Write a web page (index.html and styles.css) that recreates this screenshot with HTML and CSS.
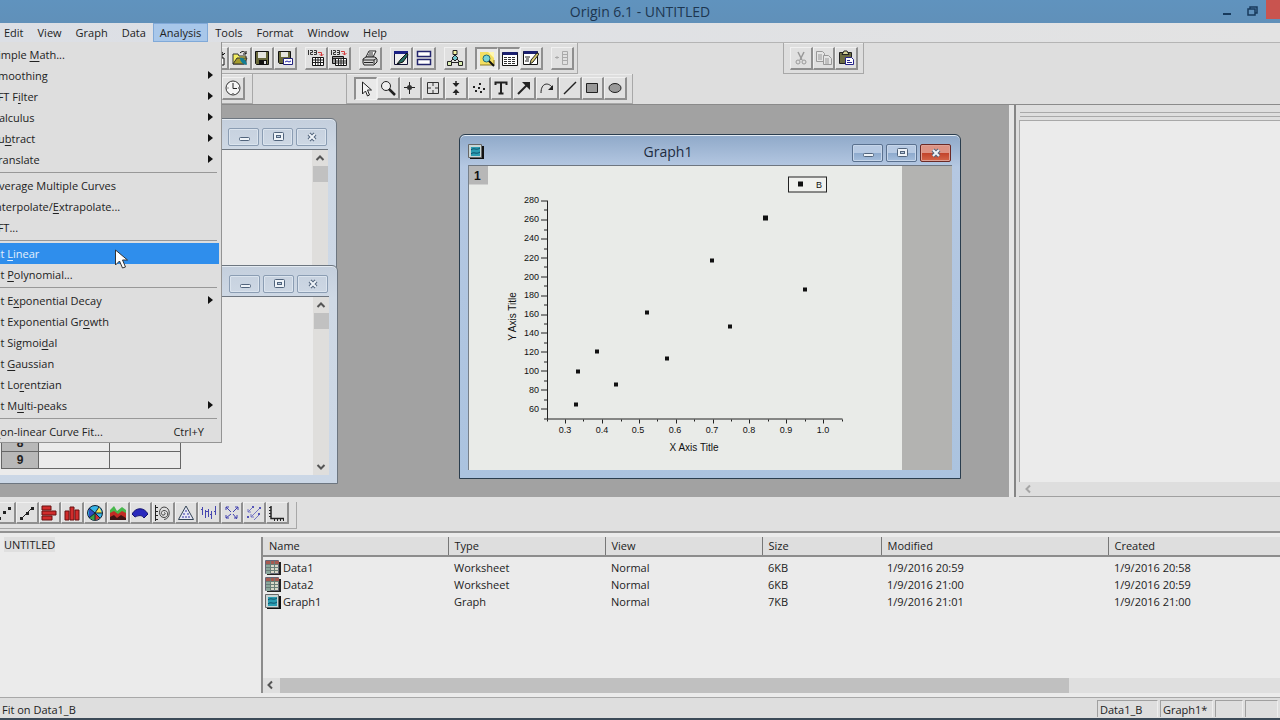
FILE: index.html
```
<!DOCTYPE html>
<html lang="en">
<head>
<meta charset="utf-8">
<title>Origin 6.1 - UNTITLED</title>
<link rel="stylesheet" href="styles.css">
</head>
<body>
<svg class="defs" aria-hidden="true">
  <symbol id="w-min" viewBox="0 0 16 12"><rect x="3.5" y="6.500" width="10" height="3" rx="1" fill="#eef3f8" stroke="#51647c"/></symbol>
  <symbol id="w-max" viewBox="0 0 16 12"><rect x="3.500" y="1.500" width="10" height="8" rx="1" fill="#eef3f8" stroke="#51647c"/><rect x="6.500" y="4.500" width="4" height="2" fill="#b9cbe0" stroke="#51647c"/></symbol>
  <symbol id="w-close" viewBox="0 0 16 12"><path d="M5 3l6 6M11 3l-6 6" stroke="#51647c" stroke-width="4"/><path d="M5 3l6 6M11 3l-6 6" stroke="#eef3f8" stroke-width="2"/></symbol>
  <symbol id="sheet" viewBox="0 0 16 16"><path d="M2 2h14v13H2z" fill="#222"/><path d="M.5.5h13v13H.5z" fill="#d8d8c8" stroke="#667"/><path d="M1 1h13v3H1z" fill="#a65a50"/><path d="M1 4h4v10H1z" fill="#8aa79c"/><path d="M1 4.500h13M1 7.500h13M1 10.500h13M5.500 1v13M9.500 1v13" stroke="#6a7e78"/></symbol>
  <symbol id="graphico" viewBox="0 0 16 16"><path d="M2 2h14v13H2z" fill="#111"/><path d="M.5.5h13v13H.5z" fill="#c9d6d6" stroke="#666"/><path d="M3 3h9v9H3z" fill="#2b9db2"/><path d="M3 6c3-3 5 1 9-2M3 10c3-3 5 1 9-2" stroke="#0b4c66" fill="none"/></symbol>
  <symbol id="up" viewBox="0 0 10 8"><path d="M1.500 6L5 2.500 8.500 6" fill="none" stroke="#555" stroke-width="2"/></symbol>
</svg>

<div class="app">
  <header class="titlebar">
    <h1>Origin 6.1 - UNTITLED</h1>
    <div class="sys">
      <button aria-label="Minimize"><svg width="12" height="12"><path d="M1 9h8" stroke="#173a5c" stroke-width="2"/></svg></button>
      <button aria-label="Restore"><svg width="12" height="12"><path d="M1 4h7v6H1zM3 4V2h7v6H8" fill="none" stroke="#173a5c" stroke-width="1.500"/></svg></button>
      <button class="quit" aria-label="Close"></button>
    </div>
  </header>

  <nav class="menubar">
    <button>Edit</button><button>View</button><button>Graph</button><button>Data</button><button class="open">Analysis</button><button>Tools</button><button>Format</button><button>Window</button><button>Help</button>
  </nav>

  <div class="toolbars">
    <div class="bar standard">
      <div class="set four">
        <button aria-label="New"><svg viewBox="0 0 16 16"><path d="M3 5h10v10H3z" fill="#fff" stroke="#111"/><path d="M8 8h7v7H8z" fill="#fff" stroke="#111"/><path d="M10 2c3-2 4 1 4 3l-2-2m2 2l2-2" stroke="#111" fill="none"/></svg></button>
        <button aria-label="Open"><svg viewBox="0 0 16 16"><path d="M1 14V4h5l1 2h7v8z" fill="#f3ee62" stroke="#333"/><path d="M1 14l4-6h10l-3 6z" fill="#a59c2d" stroke="#333"/><path d="M8 3c3-3 5-1 6 1m0 0V1m0 3h-3" stroke="#111" fill="none"/><path d="M8 8c3-1 6 2 7 7-4-1-7-3-7-7z" fill="#127e96"/></svg></button>
        <button aria-label="Save"><svg viewBox="0 0 16 16"><path d="M1.500 1.500h13v13h-12l-1-1z" fill="#68683a" stroke="#111"/><path d="M4 2h8v6H4z" fill="#e4e4de"/><path d="M5 10h8v5H5z" fill="#111"/><path d="M10 11h2v3h-2z" fill="#ddd"/></svg></button>
        <button aria-label="Save template"><svg viewBox="0 0 16 16"><path d="M1.500 1.500h12v12h-11l-1-1z" fill="#68683a" stroke="#111"/><path d="M4 2h7v5H4z" fill="#e4e4de"/><path d="M6.500 8.500h9v6h-9z" fill="#fff" stroke="#22227c"/><path d="M8 12l2-1 2 1 2-1" stroke="#22a" fill="none"/></svg></button>
      </div>
      <div class="set two">
        <button aria-label="Import ASCII"><svg viewBox="0 0 16 16"><path d="M.5 0v5M2 .5h2.500v2H2.500v2H5M6 .5h2.500v4H6m0-2h2" stroke="#333" fill="none"/><path d="M10 2.500h3.500V6M11.500 4l2 2 2-2" stroke="#d33b3b" fill="none"/><path d="M4.500 7.500h11v8h-11z" fill="#fff" stroke="#111"/><path d="M5 10h10M5 12.500h10M7.500 8v7M10 8v7M12.500 8v7" stroke="#222"/></svg></button>
        <button aria-label="Import multiple ASCII"><svg viewBox="0 0 16 16"><path d="M.5 0v5M2 .5h2.500v2H2.500v2H5M6 .5h2.500v4H6m0-2h2" stroke="#333" fill="none"/><path d="M10 1.500h3.500V5M11.500 3l2 2 2-2" stroke="#d33b3b" fill="none"/><path d="M1.500 6.500h11v7h-11z" fill="#999" stroke="#111"/><path d="M4.500 8.500h11v7h-11z" fill="#fff" stroke="#111"/><path d="M2 8.500h10M5 11h10M5 13h10M7.500 9v6M10 9v6M12.500 9v6" stroke="#222"/></svg></button>
      </div>
      <div class="set one"><button aria-label="Print"><svg viewBox="0 0 16 16"><path d="M4 7l3-6h7l-3 6z" fill="#fff" stroke="#222"/><path d="M7 3h4M6 5h5" stroke="#222"/><path d="M1 9l3-2h9l2 2v3l-3 3H2l-1-2z" fill="#d6d6d6" stroke="#222"/><path d="M1 10h11l3-2M2 12.500h9M12 10v4" stroke="#222" fill="none"/></svg></button></div>
      <div class="set two">
        <button aria-label="Custom routine"><svg viewBox="0 0 16 16"><path d="M1.500 1.500h13v13h-13z" fill="#eee" stroke="#113"/><path d="M1 1h14v3H1z" fill="#1c2184"/><path d="M14 3L8 9l-4 5 6-2 5-7z" fill="#276b62" stroke="#111"/></svg></button>
        <button aria-label="Refresh"><svg viewBox="0 0 16 16"><path d="M1.500 1.500h13v5h-13zM1.500 9.500h13v5h-13z" fill="#fff" stroke="#22246c" stroke-width="1.500"/></svg></button>
      </div>
      <div class="set one"><button aria-label="Duplicate"><svg viewBox="0 0 16 16"><path d="M8 4v3M8 7L3 12M8 7l5 5M3 12.500h10" stroke="#222" fill="none"/><path d="M6 .5h4v4H6z" fill="#f2f1a0" stroke="#222"/><path d="M8 5l3 3-3 3-3-3z" fill="#6cc3cc" stroke="#222"/><path d="M.5 11.500h4v4h-4zM11.500 11.500h4v4h-4z" fill="#d9ecb0" stroke="#222"/></svg></button></div>
      <div class="set three">
        <button class="down" aria-label="Project explorer"><svg viewBox="0 0 16 16"><path d="M1 1h14v13H1z" fill="#f4df62"/><path d="M9 1h6v6z" fill="#fff7b0"/><path d="M1 14h14V9" stroke="#8c7b24" fill="none"/><circle cx="7.500" cy="7.500" r="3.500" fill="#79d4d8" stroke="#226b74"/><path d="M10 10l5 5" stroke="#111" stroke-width="2"/></svg></button>
        <button class="down" aria-label="Results log"><svg viewBox="0 0 16 16"><path d="M.5 1.500h15v13H.5z" fill="#fff" stroke="#111"/><path d="M.5 1h15v3H.5z" fill="#1b2070"/><path d="M2 6.500h12M2 8.500h12M2 10.500h12M2 12.500h12" stroke="#333" stroke-dasharray="3 1"/></svg></button>
        <button aria-label="Script window"><svg viewBox="0 0 16 16"><path d="M.5 1.500h14v13H.5z" fill="#fff" stroke="#111"/><path d="M.5 1h14v3H.5z" fill="#1b2070"/><path d="M2 7h5M3 9h3M2 11h4" stroke="#222"/><path d="M14 3l2 1-6 8-3 2 1-4z" fill="#dccd72" stroke="#222"/></svg></button>
      </div>
      <div class="set one"><button disabled aria-label="Add column"><svg viewBox="0 0 16 16"><path d="M1 7.500h4M3 6v3" stroke="#aaa"/><path d="M8.500 1.500h5v13h-5zM8 4.500h5M8 7.500h5M8 10.500h5" fill="none" stroke="#aaa"/></svg></button></div>
    </div>
    <div class="bar clip">
      <div class="set three">
        <button disabled aria-label="Cut"><svg viewBox="0 0 16 16"><path d="M5 2l4 8M11 2L7 10" stroke="#999" stroke-width="1.500"/><circle cx="5" cy="12" r="2" fill="none" stroke="#999"/><circle cx="11" cy="12" r="2" fill="none" stroke="#999"/></svg></button>
        <button disabled aria-label="Copy"><svg viewBox="0 0 16 16"><path d="M.5 1.500h6l2 2v8h-8zM2 5h4M2 7h4M2 9h4" fill="#e5e5e5" stroke="#999"/><path d="M7.500 5.500h5l3 3v6h-8zM9 9h4M9 11h4M9 13h4" fill="#e5e5e5" stroke="#999"/></svg></button>
        <button aria-label="Paste"><svg viewBox="0 0 16 16"><path d="M1.500 2.500h12v11h-12z" fill="#6b6b42" stroke="#222"/><path d="M4 4.500L6 1h3l2 3.500z" fill="#d6d399" stroke="#222"/><path d="M7.500 7.500h6l2 2v5h-8z" fill="#fff" stroke="#26248a"/><path d="M9 10.500h3M9 12.500h5" stroke="#26248a"/></svg></button>
      </div>
    </div>
    <div class="bar tools-a"><div class="set one"><button aria-label="Clock"><svg viewBox="0 0 16 16"><circle cx="8" cy="8" r="7" fill="#f5f5f5" stroke="#333"/><path d="M8 3v5.500h4" stroke="#222" fill="none"/><path d="M8 13v1M2.500 8h1M13 8h1" stroke="#222"/></svg></button></div></div>
    <div class="bar tools-b">
      <div class="set twelve">
        <button class="down" aria-label="Pointer"><svg viewBox="0 0 16 16"><path d="M4.500 1v12l3-3 2 5 2-1-2-5h4z" fill="#f4f4f4" stroke="#222"/></svg></button>
        <button aria-label="Zoom"><svg viewBox="0 0 16 16"><circle cx="6" cy="6" r="4.500" fill="#eee" stroke="#222"/><path d="M9 9l6 6" stroke="#222" stroke-width="2.500"/></svg></button>
        <button aria-label="Screen reader"><svg viewBox="0 0 16 16"><path d="M7.500 2v12M2 7.500h11" stroke="#222"/><circle cx="7.500" cy="7.500" r="2.500" fill="#333"/></svg></button>
        <button aria-label="Data reader"><svg viewBox="0 0 16 16"><path d="M2.500 2.500h11v11h-11z" fill="none" stroke="#333"/><path d="M8 3v3M8 10v3M3 8h3M10 8h3" stroke="#333"/></svg></button>
        <button aria-label="Data selector"><svg viewBox="0 0 16 16"><path d="M8 1v3M8 12v3" stroke="#222" stroke-width="1.500"/><path d="M4.500 3h7L8 7zM4.500 13h7L8 9z" fill="#222"/></svg></button>
        <button aria-label="Draw data"><svg viewBox="0 0 16 16"><path d="M2 6h2v2H2zM4 10h2v2H4zM7 7h2v2H7zM8 3h2v2H8zM12 8h2v2h-2zM9 11h2v2H9z" fill="#222"/></svg></button>
        <button aria-label="Text"><svg viewBox="0 0 16 16"><path d="M2.500 5V2.500h11V5M8 3v11M5.500 13.500h5" fill="none" stroke="#222" stroke-width="2"/></svg></button>
        <button aria-label="Arrow"><svg viewBox="0 0 16 16"><path d="M2 14L11 5" stroke="#222" stroke-width="2"/><path d="M14 2v8L6 2z" fill="#222"/></svg></button>
        <button aria-label="Curved arrow"><svg viewBox="0 0 16 16"><path d="M2 13C2 3 9 2 13 7" stroke="#222" fill="none"/><path d="M14 5v5H9z" fill="#222"/></svg></button>
        <button aria-label="Line"><svg viewBox="0 0 16 16"><path d="M2 14L14 2" stroke="#222" stroke-width="1.500"/></svg></button>
        <button aria-label="Rectangle"><svg viewBox="0 0 16 16"><path d="M2.500 3.500h11v9h-11z" fill="#999" stroke="#222"/></svg></button>
        <button aria-label="Ellipse"><svg viewBox="0 0 16 16"><ellipse cx="8" cy="8" rx="6" ry="4.500" fill="#999" stroke="#222"/></svg></button>
      </div>
    </div>
  </div>

  <main class="workspace">
    <section class="mdi">
      <article class="win data1">
        <div class="wtitle"><div class="wbtns"><button aria-label="Minimize"><svg><use href="#w-min"/></svg></button><button aria-label="Maximize"><svg><use href="#w-max"/></svg></button><button aria-label="Close"><svg><use href="#w-close"/></svg></button></div></div>
        <div class="wbody"><div class="cells"></div><div class="vscroll"><svg><use href="#up"/></svg><i></i></div></div>
      </article>
      <article class="win data2">
        <div class="wtitle"><div class="wbtns"><button aria-label="Minimize"><svg><use href="#w-min"/></svg></button><button aria-label="Maximize"><svg><use href="#w-max"/></svg></button><button aria-label="Close"><svg><use href="#w-close"/></svg></button></div></div>
        <div class="wbody">
          <div class="cells"><table class="sheet"><tr><th scope="row">8</th><td></td><td></td></tr><tr><th scope="row">9</th><td></td><td></td></tr></table></div>
          <div class="vscroll"><svg><use href="#up"/></svg><i></i><svg class="dn"><use href="#up"/></svg></div>
        </div>
      </article>
      <article class="win graph">
        <div class="wtitle"><svg class="ico"><use href="#graphico"/></svg><h2>Graph1</h2><div class="wbtns"><button aria-label="Minimize"><svg><use href="#w-min"/></svg></button><button aria-label="Maximize"><svg><use href="#w-max"/></svg></button><button class="red" aria-label="Close"><svg><use href="#w-close"/></svg></button></div></div>
        <div class="wbody">
          <svg class="plot" viewBox="469 167 433 303" role="img" aria-label="Scatter plot of B">
            <rect x="468" y="166" width="20" height="19" fill="#b7b7b7"/>
            <text class="layer" x="474" y="180">1</text>
            <path class="ax" d="M547.500 201v219M547 419.500h295.500M541 201.500h6M541 220.500h6M541 239.500h6M541 258.500h6M541 277.500h6M541 296.500h6M541 315.500h6M541 333.500h6M541 352.500h6M541 371.500h6M541 390.500h6M541 409.500h6M544 210.500h3M544 230.500h3M544 249.500h3M544 267.500h3M544 286.500h3M544 305.500h3M544 324.500h3M544 343.500h3M544 362.500h3M544 381.500h3M544 400.500h3M544 419.500h3M565.500 420v4M602.500 420v4M639.500 420v4M676.500 420v4M713.500 420v4M749.500 420v4M786.500 420v4M823.500 420v4M547.500 420v2M583.500 420v2M621.500 420v2M657.500 420v2M694.500 420v2M731.500 420v2M768.500 420v2M805.500 420v2M842.500 420v2"/>
            <g class="tick end"><text x="539" y="203">280</text><text x="539" y="222">260</text><text x="539" y="241">240</text><text x="539" y="261">220</text><text x="539" y="280">200</text><text x="539" y="298">180</text><text x="539" y="317">160</text><text x="539" y="336">140</text><text x="539" y="355">120</text><text x="539" y="374">100</text><text x="539" y="393">80</text><text x="539" y="412">60</text></g>
            <g class="tick mid"><text x="565" y="433">0.3</text><text x="602" y="433">0.4</text><text x="638" y="433">0.5</text><text x="675" y="433">0.6</text><text x="712" y="433">0.7</text><text x="749" y="433">0.8</text><text x="786" y="433">0.9</text><text x="823" y="433">1.0</text></g>
            <text class="name" x="694" y="451">X Axis Title</text>
            <text class="name" transform="translate(516 317) rotate(-90)">Y Axis Title</text>
            <rect x="788.500" y="177.500" width="38" height="15" fill="#f0f1ee" stroke="#222"/>
            <path d="M798 182h5v5h-5z"/><text class="tick" x="816" y="188">B</text>
            <path d="M763 216h5v5h-5zM710 259h4v4h-4zM803 288h4v4h-4zM645 311h4v4h-4zM728 325h4v4h-4zM595 350h4v4h-4zM665 357h4v4h-4zM576 370h4v4h-4zM614 383h4v4h-4zM574 403h4v4h-4z"/>
          </svg>
          <div class="outside"></div>
        </div>
      </article>
    </section>
    <aside class="dock">
      <div class="grip"></div>
      <div class="log"></div>
      <div class="logscroll"><svg class="left faint"><use href="#up"/></svg></div>
    </aside>
  </main>

  <div class="plotbar">
    <div class="set thirteen">
      <button aria-label="Scatter"><svg viewBox="0 0 16 16"><path d="M2 12h3v3H2zM7 6h3v3H7zM12 2h3v3h-3z" fill="#222"/></svg></button>
      <button aria-label="Line and symbol"><svg viewBox="0 0 16 16"><path d="M3 13L13 3" stroke="#222"/><path d="M1 12h3v3H1zM7 7h3v3H7zM12 2h3v3h-3z" fill="#222"/></svg></button>
      <button aria-label="Bar"><svg viewBox="0 0 16 16"><path d="M1 1h9v4H1zM1 6h14v4H1zM1 11h10v4H1z" fill="#d12c2c" stroke="#611"/></svg></button>
      <button aria-label="Column"><svg viewBox="0 0 16 16"><path d="M1 6h4v9H1zM6 2h4v13H6zM11 5h4v10h-4z" fill="#d12c2c" stroke="#611"/></svg></button>
      <button aria-label="Pie"><svg viewBox="0 0 16 16"><circle cx="8" cy="8" r="7.500" fill="#38b5e8" stroke="#123"/><path d="M8 8L2 3v10z" fill="#2d4dc4"/><path d="M8 8l4-6 3 6z" fill="#eee85b"/><path d="M8 8l5 5-5 2.500z" fill="#cf3131"/><path d="M8 8v7.500L2 13z" fill="#3aa145"/><path d="M8 8L2 3M8 8l4-6M8 8h7M8 8v7M8 8l-6 5M8 8l5 5" stroke="#123"/></svg></button>
      <button aria-label="Area"><svg viewBox="0 0 16 16"><path d="M0 15V5l4-4 3 5 5-4 4 3v10z" fill="#47b84b"/><path d="M0 15V8l4-2 4 3 4-3 4 2v7z" fill="#c22b24"/><path d="M0 15v-3l4-2 3 3 4-3 5 3v2z" fill="#401414"/></svg></button>
      <button aria-label="Fill area"><svg viewBox="0 0 16 16"><path d="M0 9C4 2 12 2 16 9l-4 4c-2-3-5-3-9-1z" fill="#2929bd" stroke="#151570"/></svg></button>
      <button aria-label="Polar"><svg viewBox="0 0 16 16"><path d="M.5 0v16M1 2.500h2M1 6.500h2M1 10.500h2M1 14.500h2" stroke="#222"/><path d="M9 8c1-1 2 1 0 2-3 1-4-4 0-4.500 5 0 5 7 0 7-6 0-6-10 0-10.500 7 0 7 12 0 12.500" fill="none" stroke="#444"/></svg></button>
      <button aria-label="Ternary"><svg viewBox="0 0 16 16"><path d="M8 1l7.500 13.500H.5z" fill="#e7e7f4" stroke="#345"/><path d="M8 5v2M6 8v2M10 8v2M5 11v2M8 11v2M11 11v2" stroke="#3434a8"/></svg></button>
      <button aria-label="High low close"><svg viewBox="0 0 16 16"><path d="M1.500 2v8M0 4.500h2M4.500 5v8M5 6.500h2M7.500 4v8M10.500 6v8M9 9.500h2M14.500 1v9M13 6.500h2" stroke="#4646b0"/></svg></button>
      <button aria-label="Vector"><svg viewBox="0 0 16 16"><path d="M2 2l5 5M14 2L9 7M9 9l4 5M7 9l-5 4M2 5V2h3M11 2h3v3M10 13h3v-3M2 10v3h3" stroke="#3f3fae" fill="none"/></svg></button>
      <button aria-label="Vector XYXY"><svg viewBox="0 0 16 16"><path d="M2 7l5-5M5 12l9-9M8 15l6-6M2 4v3h3M5 9v3h3" stroke="#7777c4" fill="none"/><path d="M1 11h2v2H1zM12 8h2v2h-2zM6 1h2v2H6zM13 2h2v2h-2z" fill="#5555b8"/></svg></button>
      <button aria-label="Template"><svg viewBox="0 0 16 16"><path d="M2 1v12.500h13" stroke="#222" stroke-width="1.500" fill="none"/><path d="M0 2.500h2M0 5.500h2M0 8.500h2M0 11.500h2M5.500 14v2M8.500 14v2M11.500 14v2M14.500 14v2" stroke="#222"/></svg></button>
    </div>
  </div>

  <section class="explorer">
    <div class="tree"><span>UNTITLED</span></div>
    <div class="list">
      <table>
        <colgroup><col class="c1"><col class="c2"><col class="c2"><col class="c4"><col class="c5"><col></colgroup>
        <thead><tr><th>Name</th><th>Type</th><th>View</th><th>Size</th><th>Modified</th><th>Created</th></tr></thead>
        <tbody>
          <tr><td><span class="file"><svg><use href="#sheet"/></svg>Data1</span></td><td>Worksheet</td><td>Normal</td><td>6KB</td><td>1/9/2016 20:59</td><td>1/9/2016 20:58</td></tr>
          <tr><td><span class="file"><svg><use href="#sheet"/></svg>Data2</span></td><td>Worksheet</td><td>Normal</td><td>6KB</td><td>1/9/2016 21:00</td><td>1/9/2016 20:59</td></tr>
          <tr><td><span class="file"><svg><use href="#graphico"/></svg>Graph1</span></td><td>Graph</td><td>Normal</td><td>7KB</td><td>1/9/2016 21:01</td><td>1/9/2016 21:00</td></tr>
        </tbody>
      </table>
      <div class="hscroll"><svg class="left"><use href="#up"/></svg><i></i></div>
    </div>
  </section>

  <footer class="status">
    <span class="msg">Fit on Data1_B</span>
    <span class="cell a">Data1_B</span><span class="cell b">Graph1*</span><span class="cell c"></span><span class="cell d"></span>
  </footer>

  <div class="menu" role="menu">
    <button role="menuitem"><span>Simple <u>M</u>ath...</span></button>
    <button role="menuitem" class="sub"><span><u>S</u>moothing</span></button>
    <button role="menuitem" class="sub"><span>FFT F<u>i</u>lter</span></button>
    <button role="menuitem" class="sub"><span><u>C</u>alculus</span></button>
    <button role="menuitem" class="sub"><span>Su<u>b</u>tract</span></button>
    <button role="menuitem" class="sub"><span><u>T</u>ranslate</span></button>
    <hr>
    <button role="menuitem"><span><u>A</u>verage Multiple Curves</span></button>
    <button role="menuitem"><span>Interpolate/<u>E</u>xtrapolate...</span></button>
    <button role="menuitem"><span><u>F</u>FT...</span></button>
    <hr>
    <button role="menuitem" class="hot"><span>Fit <u>L</u>inear</span></button>
    <button role="menuitem"><span>Fit <u>P</u>olynomial...</span></button>
    <hr>
    <button role="menuitem" class="sub"><span>Fit E<u>x</u>ponential Decay</span></button>
    <button role="menuitem"><span>Fit Exponential Gr<u>o</u>wth</span></button>
    <button role="menuitem"><span>Fit Sigmoi<u>d</u>al</span></button>
    <button role="menuitem"><span>Fit <u>G</u>aussian</span></button>
    <button role="menuitem"><span>Fit Lo<u>r</u>entzian</span></button>
    <button role="menuitem" class="sub"><span>Fit M<u>u</u>lti-peaks</span></button>
    <hr>
    <button role="menuitem"><span><u>N</u>on-linear Curve Fit...</span><span class="key">Ctrl+Y</span></button>
  </div>
  <svg class="pointer" width="14" height="20"><path d="M1.500 1v15l4-4 3 7 3-1-3-7h5z" fill="#fff" stroke="#333"/></svg>
</div>
</body>
</html>
```
FILE: styles.css
```
* { box-sizing: border-box; }
body {
  margin: 0;
  font: 11px/16px "Open Sans", "Noto Sans", sans-serif;
  color: #222;
  background: #dedede;
}
button {
  font: inherit;
  color: inherit;
  border: 0;
  padding: 0;
  margin: 0;
  background: none;
}
h1, h2 { margin: 0; font-weight: 400; }
.defs { position: absolute; width: 0; height: 0; }
.app {
  position: relative;
  height: 100vh;
  overflow: hidden;
  display: flex;
  flex-direction: column;
  border-bottom: 2px solid #3c4a58;
}

.titlebar {
  position: relative;
  flex: none;
  height: 23px;
  background: linear-gradient(#6093be, #6090b9);
}
.titlebar h1 {
  font-size: 14px;
  line-height: 23px;
  text-align: center;
  color: #1d3650;
}
.sys { position: absolute; right: 0; top: 0; display: flex; gap: 13px; }
.sys svg { display: block; margin-top: 3px; }
.quit { width: 14px; height: 19px; margin-left: -6px; background: #c9544f; }

.menubar {
  flex: none;
  height: 20px;
  display: flex;
  background: linear-gradient(90deg, #dcdfe5, #e3e3e3);
  border-bottom: 1px solid #b4b4b4;
}
.menubar button { padding: 0 7px; line-height: 18px; }
.menubar button:first-child { margin-left: -3px; }
.menubar .open { background: #a8c7ea; box-shadow: inset 0 0 0 1px #80a9d8; }

.toolbars {
  flex: none;
  display: grid;
  grid-template-columns: 253px 94px 231px 205px 81px;
  grid-template-rows: 31px 30px;
  height: 62px;
  border-bottom: 1px solid #8a8a8a;
}
.bar {
  display: flex;
  align-items: center;
  gap: 8px;
  border-right: 1px solid #a8a8a8;
  border-bottom: 1px solid #a8a8a8;
  box-shadow: inset 0 1px #ececec;
}
.standard { grid-column: 1 / 4; padding-left: 206px; }
.clip { grid-column: 5; border-left: 1px solid #a8a8a8; padding-left: 6px; }
.tools-a { grid-column: 1; grid-row: 2; padding-left: 222px; }
.tools-b { grid-column: 3 / 5; grid-row: 2; width: 287px; padding-left: 7px; border-left: 1px solid #a8a8a8; margin-left: -1px; }
.set { display: flex; height: 23px; }
.one { width: 23px; }
.two { width: 46px; }
.three { width: 68px; }
.four { width: 91px; }
.twelve { width: 273px; }
.set button {
  flex: 1;
  min-width: 0;
  display: flex;
  align-items: center;
  justify-content: center;
  background: #e0e0e0;
  border: 1px solid #f0f0f0;
  border-right: 2px solid #8f8f8f;
  border-bottom: 2px solid #8f8f8f;
}
.set button.down { border-color: #8f8f8f #f0f0f0 #f0f0f0 #8f8f8f; border-width: 2px 1px 1px 2px; background: #e9e9e9; }
.set svg { flex: none; width: 16px; height: 16px; }

.workspace { flex: 1; min-height: 0; display: flex; background: #a2a2a2; }
.mdi { flex: 1; position: relative; overflow: hidden; }
.dock {
  width: 271px;
  display: flex;
  flex-direction: column;
  border-left: 5px solid #e6e6e6;
  background: #dedede;
  box-shadow: inset 2px 0 #858585;
  padding-left: 5px;
}
.grip { height: 5px; margin: 7px 0 3px 1px; border-top: 1px solid #a8a8a8; border-bottom: 1px solid #a8a8a8; }
.log { flex: 1; background: #ebebeb; border: 1px solid #a8a8a8; border-right: 0; border-bottom: 0; }
.logscroll { height: 15px; padding-left: 4px; border-bottom: 1px solid #a0a0a0; }
.left { display: block; width: 10px; height: 14px; transform: rotate(-90deg); }
.faint { opacity: .4; }

.win {
  position: absolute;
  display: flex;
  flex-direction: column;
  padding: 0 8px 8px;
  border: 1px solid #6d7680;
  border-radius: 6px 6px 0 0;
  background: linear-gradient(#c4cfdd, #cfd9e5 32px, #cbd7e6);
  box-shadow: inset 0 1px #e4ebf2;
}
.data1 { left: -60px; top: 13px; width: 397px; height: 200px; }
.data2 { left: -60px; top: 160px; width: 398px; height: 219px; }
.graph {
  left: 459px;
  top: 29px;
  width: 502px;
  height: 345px;
  border-color: #2a3d4e;
  background: linear-gradient(#8fa9c9, #b5c8e2 32px, #abc3df);
}
.wtitle { flex: none; height: 30px; display: flex; align-items: center; }
.wtitle h2 { flex: 1; text-align: center; font-size: 14px; color: #1d2c40; padding-top: 4px; }
.ico { width: 16px; height: 16px; margin-top: 4px; }
.wbtns { margin-left: auto; display: flex; gap: 3px; padding: 5px 1px 0 0; }
.wbtns button {
  width: 31px;
  height: 18px;
  display: flex;
  align-items: center;
  justify-content: center;
  border: 1px solid #8b9db3;
  border-radius: 2px;
  box-shadow: inset 0 0 0 1px #dbe4ee;
}
.wbtns svg { width: 16px; height: 12px; }
.graph .wbtns button { border-color: #5a718f; background: linear-gradient(#b7cae3 50%, #8daacd 50%, #a5bedc); box-shadow: inset 0 0 0 1px #c6d6ea; }
.graph .wbtns .red { background: linear-gradient(#dd9384 50%, #c2432a 50%, #d4674a); border-color: #6b2a26; box-shadow: inset 0 0 0 1px #dfa195; }
.wbody { flex: 1; min-height: 0; display: flex; background: #ebebeb; border-top: 1px solid #6e7680; }
.graph .wbody { border-left: 1px solid #77808a; background: #e9ebe8; }
.cells { flex: 1; display: flex; align-items: flex-end; }
.sheet { border-collapse: collapse; width: 180px; margin: 0 0 6px 52px; table-layout: fixed; }
.sheet td, .sheet th { height: 17px; padding: 0; border: 1px solid #666; line-height: 15px; }
.sheet th { width: 37px; background: #b8b8b8; font-family: "Liberation Sans", sans-serif; font-size: 12px; }
.vscroll { width: 16px; background: #dfdedc; display: flex; flex-direction: column; align-items: center; }
.vscroll svg { width: 10px; height: 16px; flex: none; }
.vscroll i { width: 15px; height: 16px; background: #c1c1c1; }
.vscroll .dn { margin-top: auto; transform: rotate(180deg); }
.plot { flex: 433; min-width: 0; font-family: "Liberation Sans", Arial, sans-serif; fill: #111; }
.outside { flex: 50; background: #b3b3b1; }
.ax { stroke: #222; fill: none; }
.tick { font-size: 9px; }
.end { text-anchor: end; }
.mid { text-anchor: middle; }
.name { font-size: 10px; text-anchor: middle; }
.layer { font-size: 12px; font-weight: 700; }

.plotbar {
  flex: none;
  height: 36px;
  padding: 5px 0 0;
  border-bottom: 2px solid #929292;
  background: #e0e0e0;
}
.plotbar .set { margin-left: -7px; width: 304px; height: 27px; padding: 0 7px 4px 0; border-right: 1px solid #a8a8a8; border-bottom: 1px solid #a8a8a8; }

.explorer { flex: none; height: 164px; display: flex; background: #ebebeb; }
.tree { width: 261px; padding: 4px; }
.tree span { background: #dfdfdf; }
.list { flex: 1; display: flex; flex-direction: column; border-left: 2px solid #8c8c8c; margin: 4px 0 4px; }
.list table { width: 100%; border-collapse: collapse; table-layout: fixed; }
.c1 { width: 185px; }
.c2 { width: 157px; }
.c4 { width: 119px; }
.c5 { width: 227px; }
.list th { height: 19px; padding: 0 6px; text-align: left; font-weight: 400; background: #dedede; border-right: 1px solid #777; border-bottom: 2px solid #8c8c8c; }
.list th:last-child { border-right: 0; }
.list td { height: 17px; padding: 0 6px; line-height: 17px; }
.list tbody tr:first-child td { height: 19px; padding-top: 2px; }
.list td:first-child { padding-left: 2px; }
.file { display: flex; align-items: center; gap: 2px; }
.file svg { width: 16px; height: 16px; }
.hscroll { margin-top: auto; height: 15px; display: flex; gap: 5px; padding-left: 2px; background: #dfdfdf; }
.hscroll i { width: 789px; background: #c0c0c0; }

.status { flex: none; height: 21px; display: flex; gap: 2px; padding: 2px 2px 0; border-top: 1px solid #a8a8a8; background: #dedede; }
.msg { flex: 1; line-height: 20px; }
.cell { height: 17px; padding-left: 2px; line-height: 18px; border-top: 1px solid #a0a0a0; border-left: 1px solid #a0a0a0; border-right: 1px solid #eee; }
.a { width: 61px; }
.b { width: 53px; }
.c { width: 28px; }
.d { width: 33px; }

.menu {
  position: absolute;
  left: -30px;
  top: 42px;
  width: 252px;
  padding-top: 2px;
  background: #dedede;
  border: 1px solid #949494;
  border-top: 0;
}
.menu button { display: flex; width: 248px; height: 21px; padding: 0 15px 0 21px; align-items: center; text-align: left; white-space: pre; }
.menu hr { height: 1px; margin: 2px 4px 2px 0; border: 0; background: #989898; }
.menu .hot { background: #2f8eec; color: #e4f0fc; }
.menu u { text-underline-offset: 2px; }
.menu .key { margin-left: auto; }
.sub::after { content: ""; margin: 0 -9px 2px auto; border: 4px solid transparent; border-left: 5px solid #111; border-right: 0; }
.pointer { position: absolute; left: 114px; top: 249px; }
```
